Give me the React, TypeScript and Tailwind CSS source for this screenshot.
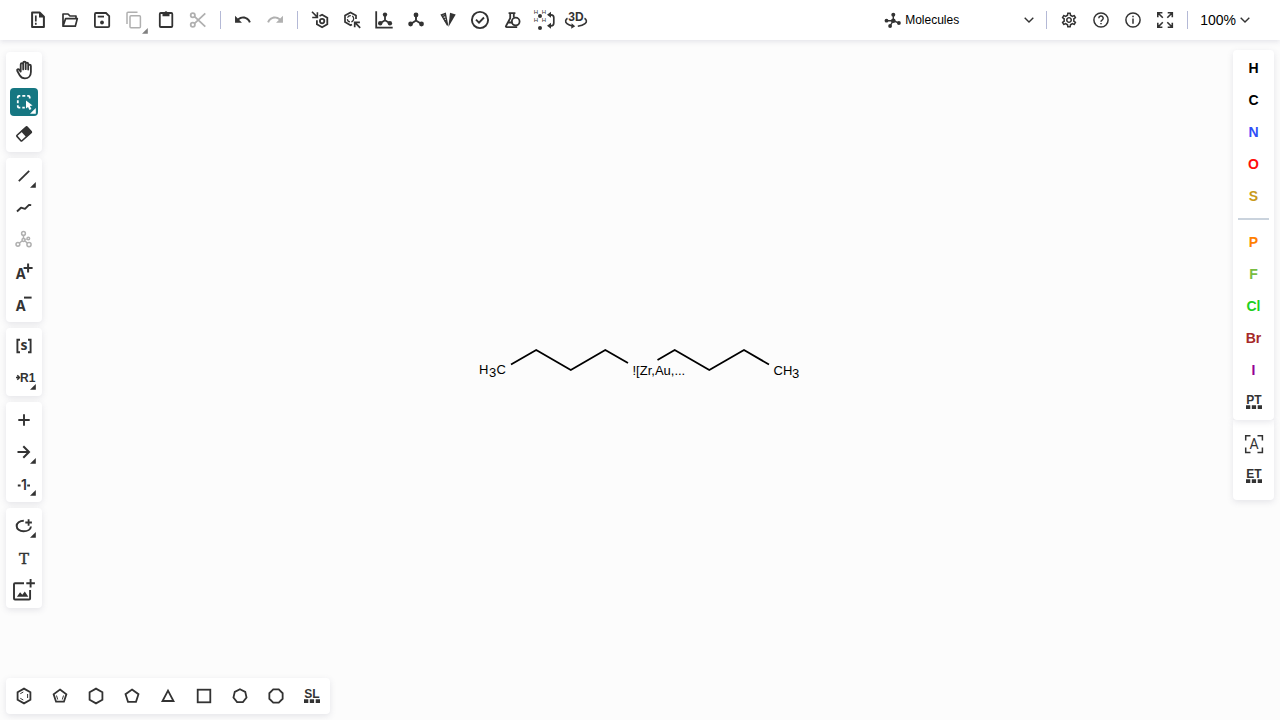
import type { ReactNode } from 'react';
import { MdOutlineSettings } from 'react-icons/md';

function Icon({ children, w = 1.8 }: { children: ReactNode; w?: number }) {
  return (
    <svg
      viewBox="0 0 24 24"
      className="size-6 shrink-0 overflow-visible"
      fill="none"
      stroke="currentColor"
      strokeWidth={w}
      aria-hidden="true"
    >
      {children}
    </svg>
  );
}

const solid = { fill: 'currentColor', stroke: 'none' };

function Corner({ className }: { className: string }) {
  return (
    <svg viewBox="0 0 6 6" className={`absolute size-1.5 ${className}`} aria-hidden="true">
      <path d="M5.8 0V5.8H0z" fill="currentColor" />
    </svg>
  );
}

type ToolProps = {
  label: string;
  children: ReactNode;
  active?: boolean;
  disabled?: boolean;
  menu?: 'edge' | 'inset';
};

function Tool({ label, children, active, disabled, menu }: ToolProps) {
  return (
    <button
      type="button"
      aria-label={label}
      title={label}
      aria-pressed={active}
      disabled={disabled}
      className={`relative flex size-7 shrink-0 items-center justify-center rounded ${
        active ? 'bg-[#167782] text-white' : disabled ? 'text-[#b0b0b0]' : 'text-[#333333]'
      }`}
    >
      {children}
      {menu === 'edge' && <Corner className="right-0 bottom-0 text-[#808080]" />}
      {menu === 'inset' && <Corner className="right-0.5 bottom-0.5" />}
    </button>
  );
}

function Divider() {
  return <div className="h-[18px] w-px shrink-0 bg-[#b4b9d6]" />;
}

function Panel({ children }: { children: ReactNode }) {
  return (
    <div className="flex w-9 flex-col items-center gap-1 rounded bg-white p-1 shadow-[0_2px_6px_rgba(103,104,132,0.16)]">
      {children}
    </div>
  );
}

function Chevron() {
  return (
    <svg viewBox="0 0 10 6" className="h-1.5 w-2.5 shrink-0" fill="none" stroke="#333333" strokeWidth="1.4" aria-hidden="true">
      <path d="M0.7 0.7L5 5l4.3-4.3" />
    </svg>
  );
}

function LabelDots({ text }: { text: string }) {
  return (
    <Icon>
      <text x="12" y="13.5" textAnchor="middle" className="font-['Liberation_Sans',sans-serif] text-[12px] font-bold" {...solid}>
        {text}
      </text>
      <path d="M4 15.200H8.300V19H4zM9.800 15.200h4.300V19H9.800zM15.700 15.200H20V19h-4.300z" {...solid} />
    </Icon>
  );
}

function regular(n: number, r: number, start = -90, cx = 12, cy = 12) {
  return Array.from({ length: n }, (_, i) => {
    const a = ((start + (i * 360) / n) * Math.PI) / 180;
    return `${(cx + r * Math.cos(a)).toFixed(2)},${(cy + r * Math.sin(a)).toFixed(2)}`;
  }).join(' ');
}

function Atom({ symbol, color }: { symbol: string; color: string }) {
  return (
    <button
      type="button"
      className={`flex size-7 items-center justify-center font-['Liberation_Sans',sans-serif] text-sm font-bold ${color}`}
    >
      {symbol}
    </button>
  );
}

const commonAtoms = [
  { symbol: 'H', color: 'text-black' },
  { symbol: 'C', color: 'text-black' },
  { symbol: 'N', color: 'text-[#304ff7]' },
  { symbol: 'O', color: 'text-[#ff0d0d]' },
  { symbol: 'S', color: 'text-[#c99a19]' },
];

const moreAtoms = [
  { symbol: 'P', color: 'text-[#ff8000]' },
  { symbol: 'F', color: 'text-[#78bc42]' },
  { symbol: 'Cl', color: 'text-[#1fd01f]' },
  { symbol: 'Br', color: 'text-[#a62929]' },
  { symbol: 'I', color: 'text-[#940094]' },
];

const turnArrow =
  'M12.5 8c-2.65 0-5.05.99-6.9 2.6L2 7v9h9l-3.62-3.62c1.39-1.16 3.16-1.88 5.12-1.88 3.54 0 6.55 2.31 7.6 5.5l2.37-.78C21.08 11.03 17.15 8 12.5 8z';

function Header() {
  return (
    <header className="z-10 flex h-10 shrink-0 items-center gap-2 bg-white pr-[30px] pl-6 shadow-[0_2px_5px_rgba(103,104,132,0.15)]">
      <div className="flex gap-1">
        <Tool label="Clear Canvas">
          <Icon w={2}>
            <path d="M6.1 4.5h7.500l4.300 4.300v10.200H6.100z" strokeLinejoin="round" />
            <path d="M13 4v5.500h5.500z" {...solid} />
            <path d="M9.800 7.500v6M9.800 14.800v2" strokeWidth="1.7" />
          </Icon>
        </Tool>
        <Tool label="Open">
          <Icon w={1.7}>
            <path d="M5 18.2V6h5l2 2h6v2.5M5 18.2h12.3l2-7.6H7.6z" strokeLinejoin="round" />
          </Icon>
        </Tool>
        <Tool label="Save As">
          <Icon>
            <path d="M6 5h10l3.2 3.2V18a1.2 1.2 0 0 1-1.2 1.2H6A1.2 1.2 0 0 1 4.9 18V6.2A1.2 1.2 0 0 1 6 5z" />
            <path d="M7.7 8.6H14" />
            <circle cx="12" cy="14.5" r="1.9" {...solid} />
          </Icon>
        </Tool>
        <Tool label="Copy" disabled menu="edge">
          <Icon w={1.5}>
            <path d="M5 16V5.2a1 1 0 0 1 1-1h9.5" />
            <rect x="8" y="7.8" width="10.4" height="12" rx="1" />
          </Icon>
        </Tool>
        <Tool label="Paste">
          <Icon>
            <rect x="5.8" y="5" width="12.5" height="14" rx="1" />
            <path d="M8.5 4.3h2a1.6 1.6 0 0 1 3 0h2V8.3h-7z" {...solid} />
          </Icon>
        </Tool>
        <Tool label="Cut" disabled>
          <Icon>
            <circle cx="6.8" cy="7.2" r="2.1" />
            <circle cx="6.8" cy="16.8" r="2.1" />
            <path d="M8.6 8.6l10.7 10M8.6 15.4l10.7-10" />
          </Icon>
        </Tool>
      </div>
      <Divider />
      <div className="flex gap-1">
        <Tool label="Undo">
          <Icon>
            <path transform="translate(2.5 2.4) scale(.77)" d={turnArrow} {...solid} />
          </Icon>
        </Tool>
        <Tool label="Redo" disabled>
          <Icon>
            <path transform="translate(21.5 2.4) scale(-.77 .77)" d={turnArrow} {...solid} />
          </Icon>
        </Tool>
      </div>
      <Divider />
      <div className="flex gap-1">
        <Tool label="Aromatize">
          <Icon>
            <path d="M11.5 8l2.6-1.3 5.2 3.1v6.4l-5.2 3-5.2-3v-4" />
            <circle cx="14.1" cy="13.1" r="2.2" />
            <path d="M4 3.8l4.8 4.8M9.4 4.3v5.2H4.2" strokeWidth="1.6" />
          </Icon>
        </Tool>
        <Tool label="Dearomatize">
          <Icon w={1.7}>
            <path d="M16 11V7.6l-5.5-3.2L5 7.6v6.5l5.5 3.2 1.5-.8" />
            <circle cx="10.5" cy="10.8" r="3.2" strokeWidth="1.2" strokeDasharray="4 1.5" />
            <path d="M20.2 19.8l-4.9-4.9M14.7 19.3v-5h5.2" />
          </Icon>
        </Tool>
        <Tool label="Layout">
          <Icon>
            <path d="M4.2 3.2v16.5h16.5" />
            <path d="M13 7v5.3L8.2 15.3M13 12.3l4.9 3" />
            <g {...solid}>
              <circle cx="13" cy="6.6" r="2.2" />
              <circle cx="8.2" cy="15.2" r="2.2" />
              <circle cx="17.9" cy="15.2" r="2.2" />
            </g>
          </Icon>
        </Tool>
        <Tool label="Clean Up">
          <Icon w={1.9}>
            <path d="M12 7v5.5L6.7 16M12 12.5l5.5 3.5" />
            <g {...solid}>
              <circle cx="12" cy="7" r="2.4" />
              <circle cx="6.6" cy="16" r="2.4" />
              <circle cx="17.5" cy="16" r="2.4" />
            </g>
          </Icon>
        </Tool>
        <Tool label="Calculate CIP">
          <Icon w={1.4}>
            <path d="M5.4 6.9L9.3 5.5 11.6 17.5z" />
            <path d="M6.2 8.5l3-1M7.4 10.8l2.2-.8M8.6 13l1.500-.5" />
            <path d="M14 4.8l5.7 1.7L12.4 19z" {...solid} />
          </Icon>
        </Tool>
        <Tool label="Check Structure">
          <Icon w={1.9}>
            <circle cx="12" cy="12" r="8.1" />
            <path d="M8 11.7l3 3 5-5.2" />
          </Icon>
        </Tool>
        <Tool label="Calculated Values">
          <Icon>
            <path d="M8.6 5.1h6.8M10.2 5v5.2L6 18c-.4.7 0 1.1.7 1.1h10.5M13.8 5v4.5M8.5 14.5h4" />
            <circle cx="15.7" cy="13.6" r="3.9" />
          </Icon>
        </Tool>
        <Tool label="Add/Remove explicit hydrogens">
          <Icon w={1.7}>
            <g className="font-['Liberation_Sans',sans-serif] text-[6px]" textAnchor="middle" {...solid}>
              <text x="4" y="6">H</text>
              <text x="12" y="6">H</text>
              <text x="4" y="14">H</text>
              <text x="12" y="14">H</text>
            </g>
            <g {...solid}>
              <circle cx="8" cy="8" r="2" />
              <circle cx="8" cy="20" r="2" />
              <path d="M15 6.8l4-3v6zM15 17.8l4-3v6z" />
            </g>
            <path d="M18 6.8h1a2.8 2.8 0 0 1 2.8 2.8V15a2.8 2.8 0 0 1-2.8 2.8h-1" />
          </Icon>
        </Tool>
        <Tool label="3D Viewer">
          <Icon w={1.6}>
            <text x="12" y="12.5" textAnchor="middle" className="font-['Liberation_Sans',sans-serif] text-[12px] font-bold" {...solid}>
              3D
            </text>
            <path d="M3.5 10.3C1.3 11.6.9 14 3 15.7c1.4 1.2 3.2 1.900 5.500 2.300M20.500 10.300c2.200 1.300 2.700 3.700.5 5.400-1.800 1.500-4.200 2.200-7.200 2.500" />
            <path d="M7.6 15.3l3.6 3-4 2.4z" {...solid} />
          </Icon>
        </Tool>
      </div>

      <div className="ml-auto flex items-center gap-2">
        <label className="relative mr-1 flex w-[150px] items-center">
          <svg viewBox="0 0 18 18" className="absolute left-0 size-[18px] text-[#333333]" aria-hidden="true">
            <path d="M9.3 3.7v6H2.5M9.3 9.7L6 15M9.3 9.7l5.5 2.3" fill="none" stroke="currentColor" strokeWidth="1.4" />
            <g fill="currentColor">
              <circle cx="9.3" cy="9.7" r="2.3" />
              <circle cx="9.3" cy="3.7" r="2" />
              <circle cx="2.5" cy="9.7" r="1.9" />
              <circle cx="6.1" cy="15" r="1.9" />
              <circle cx="14.9" cy="12" r="1.9" />
            </g>
          </svg>
          <select
            aria-label="Editor mode"
            defaultValue="Molecules"
            className="w-full appearance-none bg-transparent pl-[21px] font-['Liberation_Sans',sans-serif] text-xs text-black"
          >
            <option>Molecules</option>
            <option>Macromolecules</option>
          </select>
          <span className="pointer-events-none absolute right-0 flex">
            <Chevron />
          </span>
        </label>
        <Divider />
        <div className="flex gap-1">
          <Tool label="Settings">
            <MdOutlineSettings className="size-[18px]" />
          </Tool>
          <Tool label="Help">
            <Icon w={1.5}>
              <circle cx="12" cy="12" r="7.1" />
              <path d="M9.8 10.2a2.2 2.2 0 1 1 3.3 1.9c-.8.5-1.1.8-1.1 1.7M12 14.9v1.4" />
            </Icon>
          </Tool>
          <Tool label="About">
            <Icon w={1.5}>
              <circle cx="12" cy="12" r="7.1" />
              <path d="M12 10.5v5.3M12 7.8v1.5" />
            </Icon>
          </Tool>
          <Tool label="Fullscreen mode">
            <Icon w={1.6}>
              <path d="M4.8 9.3V4.8h4.6M4.8 4.8l5 5M14.7 4.8h4.6v4.5M19.3 4.8l-5 5M4.8 14.8v4.5h4.6M4.8 19.3l5-5M14.7 19.3h4.6v-4.5M19.3 19.3l-5-5" />
            </Icon>
          </Tool>
        </div>
        <Divider />
        <button
          type="button"
          className="flex items-center gap-1 pl-1 font-['Liberation_Sans',sans-serif] text-sm text-black"
        >
          100%
          <Chevron />
        </button>
      </div>
    </header>
  );
}

function LeftToolbar() {
  return (
    <nav aria-label="Drawing tools" className="flex w-[47px] shrink-0 flex-col gap-1.5 pt-3 pl-1.5">
      <Panel>
        <Tool label="Hand tool">
          <Icon>
            <path
              d="M8.7 13.2V6.4a1.2 1.2 0 0 1 2.5 0v5M11.2 11.2V4.9a1.25 1.25 0 0 1 2.5 0v6.3M13.7 11.2V5.9a1.25 1.25 0 0 1 2.5 0v5.6M16.2 11.5V7.9a1.25 1.25 0 0 1 2.7 0V14c0 4-2.5 6.4-6 6.4-2.6 0-4-1-5.2-3.1l-2.5-4.6c-.5-1.2 1-2 2-1l1.5 1.9"
              strokeLinejoin="round"
              strokeLinecap="round"
            />
          </Icon>
        </Tool>
        <Tool label="Rectangle selection" active menu="inset">
          <Icon>
            <path d="M5.8 8.3V7A1.3 1.3 0 0 1 7 5.8h1.3M10.3 5.8h3M15.2 5.8h1.2A1.3 1.3 0 0 1 17.7 7v1.5M5.8 10.3v3M5.8 15.3v1.1a1.3 1.3 0 0 0 1.2 1.3h1.3M10.3 17.7h2.5" />
            <path d="M14 10.5l6.6 5-2.7.5 1.5 2.9-1.9 1-1.5-3-2 1.7z" {...solid} />
          </Icon>
        </Tool>
        <Tool label="Erase">
          <Icon w={1.6}>
            <g transform="rotate(-42 12 12)">
              <rect x="5.2" y="8.3" width="13.8" height="7.4" rx="0.8" />
              <path d="M11.5 8h7.5v8h-7.500z" {...solid} />
            </g>
          </Icon>
        </Tool>
      </Panel>
      <Panel>
        <Tool label="Single Bond" menu="inset">
          <Icon>
            <path d="M6.8 17.2L17.2 6.8" />
          </Icon>
        </Tool>
        <Tool label="Chain">
          <Icon w={1.9}>
            <path d="M5 15.5l4-3.8 4 1.2 4-4 2.2.2" strokeLinejoin="round" />
          </Icon>
        </Tool>
        <Tool label="Stereochemistry" disabled>
          <Icon w={1.5}>
            <path d="M11.5 7.3v3M10 13l-2.6 2M13 13l2.3 2M13.3 11.5l1.2-.3" />
            <circle cx="11.5" cy="5.4" r="1.9" />
            <circle cx="11.5" cy="12" r="1.5" />
            <circle cx="5.9" cy="16.3" r="1.9" />
            <circle cx="17" cy="16.6" r="2.1" />
            <circle cx="16.3" cy="10.5" r="1.3" />
          </Icon>
        </Tool>
        <Tool label="Charge Plus">
          <Icon w={2}>
            <text x="3.5" y="19" className="font-['Inter',sans-serif] text-[14px] font-bold" {...solid}>A</text>
            <path d="M11.6 7.9h9M16.1 3.4v9" />
          </Icon>
        </Tool>
        <Tool label="Charge Minus">
          <Icon w={2}>
            <text x="3.5" y="19" className="font-['Inter',sans-serif] text-[14px] font-bold" {...solid}>A</text>
            <path d="M12 5.6h7.6" />
          </Icon>
        </Tool>
      </Panel>
      <Panel>
        <Tool label="S-Group">
          <Icon w={1.9}>
            <path d="M8 5.7H5.4v12.6H8M16 5.7h2.6v12.6H16" />
            <text x="12" y="16" textAnchor="middle" className="font-['Open_Sans',sans-serif] text-[14px] font-bold" {...solid}>s</text>
          </Icon>
        </Tool>
        <Tool label="R-Group Label Tool" menu="inset">
          <Icon w={1.5}>
            <path d="M4 11.5h3M5.3 9.2l2.2 2.3-2.2 2.3" />
            <text x="8" y="16" className="font-['Liberation_Sans',sans-serif] text-[12px] font-bold" {...solid}>R1</text>
          </Icon>
        </Tool>
      </Panel>
      <Panel>
        <Tool label="Reaction Plus Tool">
          <Icon w={1.9}>
            <path d="M6.3 12h11.4M12 6.3v11.4" />
          </Icon>
        </Tool>
        <Tool label="Arrow Open Angle Tool" menu="inset">
          <Icon w={2}>
            <path d="M5.5 12h11.3M11.3 6.3L17 12l-5.7 5.7" />
          </Icon>
        </Tool>
        <Tool label="Reaction Mapping Tool" menu="inset">
          <Icon w={1.9}>
            <path d="M5.8 13.5h2.8M15.2 13.5h2.8" />
            <text x="12" y="17.5" textAnchor="middle" className="font-['Inter',sans-serif] text-[14px] font-semibold" {...solid}>1</text>
          </Icon>
        </Tool>
      </Panel>
      <Panel>
        <Tool label="Shape Ellipse" menu="inset">
          <Icon w={2}>
            <path d="M11.8 6.8C7.6 6.8 4.7 9 4.7 12s2.9 5.3 6.8 5.3c4 0 7.2-1.9 7.4-4.8" />
            <path d="M13.3 8.5h6.6M16.6 5.2v6.6" strokeWidth="1.8" />
          </Icon>
        </Tool>
        <Tool label="Add text">
          <Icon>
            <text
              x="12"
              y="18"
              textAnchor="middle"
              className="font-['DejaVu_Serif',serif] text-[15px]"
              fill="currentColor"
              strokeWidth="0.4"
            >
              T
            </text>
          </Icon>
        </Tool>
        <Tool label="Add Image">
          <Icon w={1.9}>
            <path d="M12 5.3H3a1 1 0 0 0-1 1v14.2a1 1 0 0 0 1 1h14.1a1 1 0 0 0 1-1V12M14.3 5.3h8.600M18.600 1v8.600" />
            <path d="M4.9 18.8l3.2-4.6 2.2 2.5 2.5-3.2 3.5 5.3z" {...solid} />
          </Icon>
        </Tool>
      </Panel>
    </nav>
  );
}

function RightToolbar() {
  return (
    <nav aria-label="Atoms" className="flex w-[47px] shrink-0 flex-col pt-2.5 pr-1.5">
      <div className="z-10 flex flex-col items-center gap-2 rounded bg-white px-[5px] py-1 shadow-[0_2px_6px_rgba(103,104,132,0.16)]">
        <div className="flex flex-col gap-1">
          {commonAtoms.map((a) => (
            <Atom key={a.symbol} {...a} />
          ))}
        </div>
        <div className="h-0.5 w-full bg-[#cad3dd]" />
        <div className="flex flex-col gap-1">
          {moreAtoms.map((a) => (
            <Atom key={a.symbol} {...a} />
          ))}
          <Tool label="Periodic Table">
            <LabelDots text="PT" />
          </Tool>
        </div>
      </div>
      <div className="flex flex-col items-center gap-1 rounded-b bg-white py-2.5 shadow-[0_2px_6px_rgba(103,104,132,0.16)]">
        <Tool label="Any atom">
          <Icon w={1.5}>
            <path d="M8.5 3.7H3.7v4.8M15.5 3.7h4.9v4.8M3.7 15.5v4.9h4.8M20.4 15.5v4.9h-4.9" />
            <text x="12" y="17" textAnchor="middle" className="font-['Roboto',sans-serif] text-sm" {...solid}>A</text>
          </Icon>
        </Tool>
        <Tool label="Extended Table">
          <LabelDots text="ET" />
        </Tool>
      </div>
    </nav>
  );
}

function Structure() {
  return (
    <svg viewBox="0 0 340 50" className="h-[50px] w-[340px]" role="img" aria-label="Structure">
      <g fill="none" stroke="black" strokeWidth="1.8" strokeLinejoin="round">
        <path d="M41 29.5L66.2 15 100.8 35 135.3 15 158 28" />
        <path d="M187.5 25L204.7 15 239.3 35 274 15 299 29.5" />
      </g>
      <g className="font-['Liberation_Sans',sans-serif] text-[13px]" fill="black">
        <text x="9" y="39">H</text>
        <text x="19" y="42">3</text>
        <text x="26.5" y="39">C</text>
        <text x="162.5" y="40">![Zr,Au,...</text>
        <text x="303.5" y="40">CH</text>
        <text x="322" y="43">3</text>
      </g>
    </svg>
  );
}

function TemplateBar() {
  return (
    <nav
      aria-label="Templates"
      className="mb-1.5 ml-1.5 flex shrink-0 gap-2 self-start rounded bg-white p-1 shadow-[0_2px_6px_rgba(103,104,132,0.16)]"
    >
      <Tool label="Benzene">
        <Icon>
          <polygon points={regular(6, 7.4)} />
          <path d="M8.3 9.7l3-1.7M15.6 10v4M8.3 14.3l3 1.7" strokeWidth="1" />
        </Icon>
      </Tool>
      <Tool label="Cyclopentadiene">
        <Icon>
          <polygon points={regular(5, 6.7, -90, 12, 12.3)} />
          <path d="M8.5 11.5l1.2 4M15.5 11.5l-1.2 4" strokeWidth="1" />
        </Icon>
      </Tool>
      <Tool label="Cyclohexane">
        <Icon>
          <polygon points={regular(6, 7.4)} />
        </Icon>
      </Tool>
      <Tool label="Cyclopentane">
        <Icon>
          <polygon points={regular(5, 6.8, -90, 12, 12.3)} />
        </Icon>
      </Tool>
      <Tool label="Cyclopropane">
        <Icon>
          <path d="M12 6.7l5.5 10.3H6.5z" />
        </Icon>
      </Tool>
      <Tool label="Cyclobutane">
        <Icon>
          <rect x="5.7" y="5.7" width="12.6" height="12.6" />
        </Icon>
      </Tool>
      <Tool label="Cycloheptane">
        <Icon>
          <polygon points={regular(7, 6.7)} />
        </Icon>
      </Tool>
      <Tool label="Cyclooctane">
        <Icon>
          <polygon points={regular(8, 7.2, -67.5)} />
        </Icon>
      </Tool>
      <Tool label="Structure Library">
        <LabelDots text="SL" />
      </Tool>
    </nav>
  );
}

export default function App() {
  return (
    <div className="flex min-h-screen flex-col bg-[#fcfcfc]">
      <Header />
      <div className="flex flex-1">
        <LeftToolbar />
        <main className="grid flex-1 place-items-center pt-0.5">
          <Structure />
        </main>
        <RightToolbar />
      </div>
      <TemplateBar />
    </div>
  );
}
